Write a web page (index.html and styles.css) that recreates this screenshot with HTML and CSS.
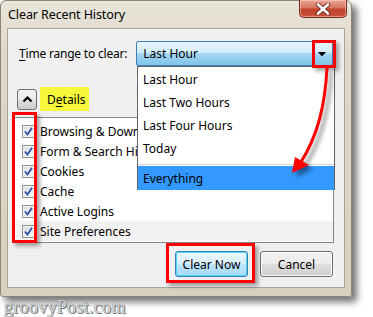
FILE: index.html
```html
<!DOCTYPE html>
<html>
<head>
<meta charset="utf-8">
<link rel="stylesheet" href="styles.css">
</head>
<body>
<div class="page">
  <div class="window">
    <div class="titlebar">
      <span class="title">Clear Recent History</span>
      <div class="close">
        <svg width="16" height="12" viewBox="0 0 16 12"><path d="M3 1.5 L13 10.5 M13 1.5 L3 10.5" stroke="#6a2a20" stroke-width="4.4" stroke-linecap="round"/><path d="M3 1.5 L13 10.5 M13 1.5 L3 10.5" stroke="#fff" stroke-width="2.6" stroke-linecap="round"/></svg>
      </div>
    </div>
    <div class="client">
      <div class="range-row">
        <span class="label"><u>T</u>ime range to clear:</span>
        <div class="select">
          <span class="select-text">Last Hour</span>
          <span class="select-btn"><svg width="8" height="5" viewBox="0 0 8 5"><path d="M0 0H8L4 4.5Z" fill="#000"/></svg></span>
        </div>
      </div>
      <div class="details-row">
        <div class="details-btn"><svg width="11" height="8" viewBox="0 0 11 8"><path d="M1.5 6.5 L5.5 2.5 L9.5 6.5" fill="none" stroke="#000" stroke-width="2.2"/></svg></div>
        <span class="details-label">D<u>e</u>tails</span>
      </div>
      <div class="listbox">
        <div class="item"><span class="cb"><svg width="9" height="9" viewBox="0 0 9 9"><path d="M1 4.5 L3.5 7.5 L8 0.8" fill="none" stroke="#2a4fa8" stroke-width="1.8"/></svg></span>Browsing &amp; Download History</div>
        <div class="item"><span class="cb"><svg width="9" height="9" viewBox="0 0 9 9"><path d="M1 4.5 L3.5 7.5 L8 0.8" fill="none" stroke="#2a4fa8" stroke-width="1.8"/></svg></span>Form &amp; Search History</div>
        <div class="item"><span class="cb"><svg width="9" height="9" viewBox="0 0 9 9"><path d="M1 4.5 L3.5 7.5 L8 0.8" fill="none" stroke="#2a4fa8" stroke-width="1.8"/></svg></span>Cookies</div>
        <div class="item"><span class="cb"><svg width="9" height="9" viewBox="0 0 9 9"><path d="M1 4.5 L3.5 7.5 L8 0.8" fill="none" stroke="#2a4fa8" stroke-width="1.8"/></svg></span>Cache</div>
        <div class="item"><span class="cb"><svg width="9" height="9" viewBox="0 0 9 9"><path d="M1 4.5 L3.5 7.5 L8 0.8" fill="none" stroke="#2a4fa8" stroke-width="1.8"/></svg></span>Active Logins</div>
        <div class="item hover"><span class="cb"><svg width="9" height="9" viewBox="0 0 9 9"><path d="M1 4.5 L3.5 7.5 L8 0.8" fill="none" stroke="#2a4fa8" stroke-width="1.8"/></svg></span>Site Preferences</div>
      </div>
      <div class="buttons">
        <div class="btn default">Clear Now</div>
        <div class="btn">Cancel</div>
      </div>
    </div>
  </div>
  <div class="watermark">groovyPost.com</div>

  <div class="dropdown">
    <div class="opt">Last Hour</div>
    <div class="opt">Last Two Hours</div>
    <div class="opt">Last Four Hours</div>
    <div class="opt">Today</div>
    <div class="sep"></div>
    <div class="opt sel">Everything</div>
  </div>

  <div class="redbox rb-arrow"></div>
  <div class="redbox rb-checks"></div>
  <div class="redbox rb-clear"></div>

  <svg class="arrow" width="373" height="317" viewBox="0 0 373 317">
    <defs>
      <filter id="sh" x="-50%" y="-50%" width="200%" height="200%"><feGaussianBlur stdDeviation="2"/></filter>
    </defs>
    <g transform="translate(4,4)" opacity="0.45" filter="url(#sh)">
      <path d="M327 68 C325 105 318 135 301 162" fill="none" stroke="#000" stroke-width="3"/>
      <path d="M292 173 L295 157 L309 165 Z" fill="#000"/>
    </g>
    <path d="M327 68 C325 105 318 135 301 162" fill="none" stroke="#f00" stroke-width="3"/>
    <path d="M292 173 L295 157 L309 165 Z" fill="#f00"/>
  </svg>
</div>
</body>
</html>
```
FILE: styles.css
```css
* { box-sizing: border-box; }
html, body { margin: 0; padding: 0; background: #fff; }
body {
  width: 373px; height: 317px; overflow: hidden;
  font-family: "Noto Sans", "Open Sans", sans-serif;
  font-size: 12px; color: #000;
}
.page { position: relative; width: 373px; height: 317px; }

.window {
  width: 352px; height: 297px;
  background: linear-gradient(180deg, #e9e5da 0%, #ddd7c6 20%, #d8d1bd 100%);
  border: 1px solid #8a8577;
  border-radius: 6px 6px 3px 3px;
  box-shadow: 5px 5px 7px rgba(0,0,0,0.55);
  padding: 0 6px 8px 6px;
  display: flex; flex-direction: column;
}
.titlebar {
  height: 27px;
  display: flex; justify-content: space-between; align-items: flex-start;
}
.title {
  margin-top: 5px; margin-left: 1px;
  font-size: 12.5px; letter-spacing: -0.1px; color: #000;
}
.close {
  width: 48px; height: 18px; margin-right: -2px; margin-top: -1px;
  border: 1px solid #7a2b1e; border-top: none;
  border-radius: 0 0 5px 5px;
  background: linear-gradient(180deg, #e9a996 0%, #d9735c 45%, #c2422a 55%, #c7503a 100%);
  box-shadow: inset 0 0 0 1px rgba(255,210,200,0.5);
  display: flex; align-items: center; justify-content: center;
}

.client {
  flex: 1;
  background: #f0f0f0;
  border: 1px solid #a4a39e;
  padding: 12px 11px 0 6px;
  display: flex; flex-direction: column;
}
.range-row { display: flex; align-items: center; height: 25px; }
.label { padding-left: 5px; width: 123px; letter-spacing: -0.2px; }
.label u, .details-label u { text-decoration-thickness: 1px; text-underline-offset: 2px; }
.select {
  width: 198px; height: 25px;
  border: 1px solid #3c7fb1; border-radius: 2px;
  background: linear-gradient(180deg, #e5f4fc 0%, #d4eefb 45%, #a6d8f4 50%, #80c3ea 100%);
  display: flex; align-items: center; justify-content: space-between;
}
.select-text { padding-left: 6px; }
.select-btn { width: 20px; height: 100%; display: flex; align-items: center; justify-content: center; padding-top: 1px; }

.details-row { display: flex; align-items: center; margin-top: 21px; height: 24px; }
.details-btn {
  margin-left: 3px;
  width: 20px; height: 21px;
  border: 1px solid #707070; border-radius: 3px;
  background: linear-gradient(180deg, #f2f2f2 0%, #ebebeb 50%, #dddddd 51%, #cfcfcf 100%);
  display: flex; align-items: center; justify-content: center;
}
.details-label {
  margin-left: 3px;
  height: 24px; width: 49px;
  background: #f6f63a;
  display: flex; align-items: center; padding-left: 7px;
}

.listbox {
  margin-top: 6px;
  width: 320px; height: 126px;
  background: #fff;
  border: 1px solid #828790;
  padding-top: 3px;
}
.item {
  height: 20px; display: flex; align-items: center;
  padding-left: 7px; white-space: nowrap; overflow: hidden;
}
.item.hover { background: #f2f2f2; }
.cb {
  width: 13px; height: 13px; margin-right: 5px; flex: none;
  border: 1px solid #8e8f8f;
  background: linear-gradient(135deg, #dcdcdc, #f6f6f6);
  box-shadow: inset 0 0 0 1px #f4f4f4;
  display: flex; align-items: center; justify-content: center;
}

.buttons { display: flex; justify-content: flex-end; gap: 12px; margin-top: 8px; }
.btn {
  width: 73px; height: 26px;
  border: 1px solid #707070; border-radius: 3px;
  background: linear-gradient(180deg, #f2f2f2 0%, #ebebeb 50%, #dddddd 51%, #cfcfcf 100%);
  box-shadow: inset 0 0 0 1px #fcfcfc;
  display: flex; align-items: center; justify-content: center;
}
.btn.default {
  border-color: #3c7fb1;
  box-shadow: inset 0 0 0 1px #48d4fc;
  background: linear-gradient(180deg, #eaf6fd 0%, #d9f0fc 50%, #bee6fd 51%, #a7d9f5 100%);
}

.watermark {
  margin-top: 0px; margin-left: 4px;
  font-family: "Liberation Serif", serif; font-size: 18px;
  color: #d8d8d8; letter-spacing: 0.3px;
  text-shadow: 0 0 1px #555, 1px 1px 0 #777;
}

.dropdown {
  position: absolute; left: 137px; top: 66px;
  width: 198px; height: 124px;
  background: #fff; border: 1px solid #646464;
  padding-top: 1px;
}
.opt { height: 23px; display: flex; align-items: center; padding-left: 5px; }
.sep { height: 1px; background: #d7d7d7; margin: 4px 0 1px; }
.opt.sel { background: #3399ff; height: 24px; }

.redbox {
  position: absolute; border: 3px solid #f00;
  box-shadow: 3px 3px 4px rgba(0,0,0,0.35);
}
.rb-arrow { left: 312px; top: 40px; width: 24px; height: 28px; }
.rb-checks { left: 12px; top: 112px; width: 25px; height: 131px; }
.rb-clear { left: 166px; top: 243px; width: 89px; height: 40px; }

.arrow { position: absolute; left: 0; top: 0; pointer-events: none; }
```
